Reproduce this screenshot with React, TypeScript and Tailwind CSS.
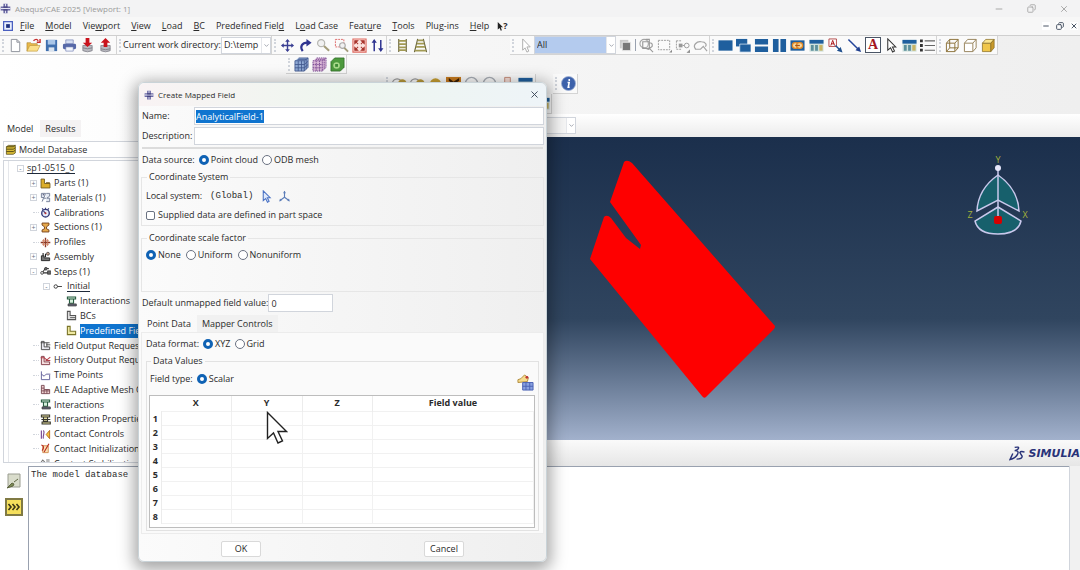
import { useEffect, useRef, type ReactNode } from "react";
import { ChevronDown, Copy, Minus, X } from "lucide-react";

const BLUE = "#1f5f9e";

// 16x16 toolbar and tree glyphs
const glyphs: Record<string, ReactNode> = {
  newFile: <path d="M3.5 1.5h6l3 3v10h-9zM9.5 1.5v3h3" fill="#fff" stroke="#8b8f99" />,
  open: (
    <>
      <path d="M1 14V5h4l1 1h6v2" fill="#e8b84a" stroke="#a8812a" strokeWidth=".6" />
      <path d="M1 14l3-6h11l-3 6z" fill="#fbe08a" stroke="#b78f32" strokeWidth=".6" />
      <path d="M8 3c2-2 4-2 5 0M15 1v3.500h-3.500" fill="none" stroke="#c62f2f" strokeWidth="1.500" />
    </>
  ),
  save: (
    <>
      <path d="M2 2h12v12H2z" fill="#3f6fae" />
      <path d="M4 2h8v5H4z" fill="#a9c6e8" />
      <path d="M5 10h6v4H5z" fill="#dbe4ef" />
    </>
  ),
  print: (
    <>
      <path d="M4 2h8v4H4z" fill="#d5def2" stroke="#5d6ca8" strokeWidth=".6" />
      <rect x="1" y="6" width="14" height="6" rx="1.500" fill="#5668a8" />
      <path d="M4 9.500h8V14H4z" fill="#f2f5fc" stroke="#5d6ca8" strokeWidth=".6" />
    </>
  ),
  dbDown: (
    <>
      <path d="M3 8h10v5.500q-5 2.500-10 0z" fill="#b9b9c0" stroke="#73737c" strokeWidth=".7" />
      <path d="M3 10.500q5 2 10 0" fill="none" stroke="#73737c" strokeWidth=".8" />
      <path d="M6 0h4v5h3L8 9.500 3 5h3z" fill="#c9131d" />
    </>
  ),
  dbUp: (
    <>
      <path d="M3 8h10v5.500q-5 2.500-10 0z" fill="#b9b9c0" stroke="#73737c" strokeWidth=".7" />
      <path d="M3 11.500q5 2 10 0" fill="none" stroke="#73737c" strokeWidth=".8" />
      <path d="M6 9.500h4V5h3L8 0 3 5h3z" fill="#c9131d" />
    </>
  ),
  pan: (
    <>
      <path d="M8 2.500v11M2.500 8h11" stroke="#3a3f93" strokeWidth="1.500" />
      <path d="M8 1l2.500 3h-5zM8 15l2.500-3h-5zM1 8l3-2.500v5zM15 8l-3-2.500v5z" fill="#3a3f93" />
    </>
  ),
  rotate: (
    <>
      <path d="M5 14C1.500 9 4.500 5 10 5" fill="none" stroke="#2f3490" strokeWidth="2.300" />
      <path d="M9 1l5.500 4L9 9z" fill="#2f3490" />
    </>
  ),
  zoom: (
    <>
      <circle cx="5.500" cy="5.500" r="3.800" fill="#f1f1f1" stroke="#b7b7b2" strokeWidth="1.300" />
      <path d="M8.500 8.500l5.500 5" stroke="#a39c7a" strokeWidth="2.200" />
    </>
  ),
  zoomBox: (
    <>
      <path d="M1.500 1.500h9v8h-9z" fill="none" stroke="#d66" strokeDasharray="2 1" />
      <circle cx="9" cy="8" r="3" fill="#f1f1f1" stroke="#aaa" strokeWidth="1.200" />
      <path d="M11 10.500l4 4" stroke="#a39c7a" strokeWidth="2" />
    </>
  ),
  fit: (
    <>
      <path d="M1 1h14v14H1z" fill="#fbe3de" stroke="#df6a60" strokeWidth="1.200" />
      <path d="M3 6V3H6zM10 3h3v3zM13 10v3h-3zM6 13H3v-3zM4 4l2.500 2.500M12 4L9.500 6.500M12 12L9.500 9.500M4 12l2.500-2.500" fill="#a8342c" stroke="#a8342c" strokeWidth="1.100" />
    </>
  ),
  cycle: (
    <>
      <path d="M4.500 3v11M11.500 2v11" stroke="#2f3490" strokeWidth="1.600" />
      <path d="M4.500 1l2.800 4H1.700zM11.500 15l2.800-4H8.700z" fill="#2f3490" />
    </>
  ),
  ladder: (
    <>
      <path d="M4 1v14M12 1v14" stroke="#67633a" strokeWidth="1.200" />
      <path d="M4 3h8M4 6.500h8M4 10h8M4 13h8" stroke="#a29a54" strokeWidth="1.900" />
    </>
  ),
  ladderPersp: (
    <>
      <path d="M5 1L1.500 15M11 1l3.500 14" stroke="#67633a" strokeWidth="1.200" />
      <path d="M5 2.500h6M4 6h8M3 9.500h10M2 13.500h12" stroke="#a29a54" strokeWidth="2" />
    </>
  ),
  arrowPale: <path d="M5 1l8 8.500H9.500l2 4.500-2 1-2-4.500L5 13z" fill="#fff" stroke="#aaa" />,
  squares: (
    <>
      <path d="M2 2h9v9H2z" fill="#c9c9c9" />
      <path d="M4.500 4.500h9v9h-9z" fill="#777" stroke="#eee" />
    </>
  ),
  selGroup: (
    <>
      <circle cx="5.500" cy="6" r="4.500" fill="none" stroke="#a5a5a5" strokeWidth="1.200" />
      <path d="M4 4h7v7H4zM7 1.500h4v3M11 5q4 0 3 4l-4 3-3-1M11 11l4 4" fill="none" stroke="#999" strokeWidth="1.200" />
    </>
  ),
  selRect: (
    <>
      <path d="M1.500 2.500h12v10h-12z" fill="none" stroke="#999" strokeDasharray="2 1" />
      <path d="M13 15.500h3v-3z" fill="#888" />
    </>
  ),
  selMid: (
    <>
      <path d="M1.500 3v9M1.500 3h5M1.500 12h5" fill="none" stroke="#999" strokeDasharray="2 1" />
      <path d="M4 6h4v4H4z" fill="#999" />
      <circle cx="12.500" cy="8" r="2.500" fill="none" stroke="#999" />
      <path d="M8 8h2M13 15.500h3v-3z" fill="#888" stroke="#999" />
    </>
  ),
  selLasso: <path d="M3 12c-4-4 1-9 6-8 5 0 6 4 4 5M2 12h6l3-3 4 5" fill="none" stroke="#a5a5a5" strokeWidth="1.300" />,
  vp1: <path d="M0.500 2.500h15v11h-15z" fill={BLUE} />,
  vpCascade: (
    <>
      <path d="M0 1h12v8H0z" fill={BLUE} />
      <path d="M4 6.500h12V15H4z" fill={BLUE} stroke="#dfeaf5" strokeWidth=".8" />
    </>
  ),
  vpTileH: <path d="M1 1h14v6H1zM1 9h14v6H1z" fill={BLUE} />,
  vpTileV: <path d="M1 1h6v14H1zM9 1h6v14H9z" fill={BLUE} />,
  vpLink: (
    <>
      <path d="M0.500 2.500h15v11h-15z" fill={BLUE} />
      <rect x="2.500" y="5" width="6.500" height="6" rx="3" fill="#f7d9a0" stroke="#e58a26" strokeWidth="1.400" />
      <rect x="7" y="5" width="6.500" height="6" rx="3" fill="#f7d9a0" stroke="#e58a26" strokeWidth="1.400" />
      <path d="M5.500 8h5" stroke="#a5541c" strokeWidth="1.400" />
    </>
  ),
  vpTable: (
    <>
      <path d="M0.500 2h15v12.500h-15z" fill="#cfe0dc" />
      <path d="M0.500 2h15v4h-15z" fill={BLUE} />
      <path d="M2 7.500h3v6H2zM6.500 7.500h3v6h-3z" fill="#5c8f9b" />
      <path d="M11 7.500h3.500v6H11z" fill="#c9b464" />
    </>
  ),
  annotate: (
    <>
      <path d="M1 1h8v8H1z" fill="#fff" stroke="#a33" strokeWidth=".9" />
      <path d="M3 8l2-5.500L7 8M3.500 6.200h3" fill="none" stroke="#a11" />
      <path d="M8 8l4 4" stroke="#1f4f8e" strokeWidth="1.500" />
      <path d="M15.500 15.500l-2-6-4 4z" fill="#1f4f8e" />
    </>
  ),
  arrowLine: (
    <>
      <path d="M1.500 1.500l10 10" stroke="#23449a" strokeWidth="1.600" />
      <path d="M15 15l-2-6-4 4z" fill="#1f3f8e" />
    </>
  ),
  arrow: <path d="M4 1l8.500 8.500H9l2.200 4.500-2 1L7 10.500 4 13z" fill="#fff" stroke="#333" strokeWidth="1.100" />,
  list: (
    <>
      <path d="M5 3h11M5 8h11M5 13h11" stroke="#666" strokeWidth="1.200" />
      <path d="M0 1.500h3v3H0zM0 6.500h3v3H0zM0 11.500h3v3H0z" fill="#333" />
    </>
  ),
  cubeWire: <path d="M1.500 5.500h9v9h-9zM5 1.500h9v9H5zM1.500 5.500L5 1.500M10.500 5.500l3.500-4M10.500 14.500l3.500-4M1.500 14.500l3.500-4" fill="none" stroke="#8a6f35" />,
  cubeHidden: <path d="M1.500 5.500h9v9h-9zM1.500 5.500L5 1.500h9v9l-3.500 4M10.500 5.500l3.500-4" fill="#fff" stroke="#948058" />,
  cubeShade: (
    <>
      <path d="M1.500 5.500h9v9h-9z" fill="#f0c64a" stroke="#8a6f25" strokeWidth=".8" />
      <path d="M1.500 5.500L5 1.500h9l-3.500 4z" fill="#fbe58e" stroke="#8a6f25" strokeWidth=".8" />
      <path d="M10.500 5.500l3.500-4v9l-3.500 4z" fill="#c99a2a" stroke="#8a6f25" strokeWidth=".8" />
    </>
  ),
  meshBlue: (
    <>
      <path d="M1 4l4-3h10v10l-4 4H1z" fill="#8fa9d4" />
      <path d="M1 4h10v11H1zM11 4l4-3M1 8h10M1 11.500h10M4.500 4v11M8 4v11M13 3v10M4 2.500h9.500M15 1v10l-4 4M11 8l4-3.500M11 11.500l4-3.500M5 1h10" fill="none" stroke="#43598f" strokeWidth=".9" />
    </>
  ),
  meshPurple: (
    <>
      <path d="M1 4l4-3h10v10l-4 4H1z" fill="#d9b7d6" />
      <path d="M1 4h10v11H1zM11 4l4-3M1 8h10M1 11.500h10M4.500 4v11M8 4v11M13 3v10M4 2.500h9.500M15 1v10l-4 4M5 1h10" fill="none" stroke="#7b4a94" strokeWidth="1" strokeDasharray="1.500 .8" />
    </>
  ),
  meshGreen: (
    <>
      <path d="M1 5l4-4h10v10l-4 4H1z" fill="#4d9a3e" stroke="#2c6a26" strokeWidth=".8" />
      <circle cx="7" cy="9" r="3.500" fill="#a8d98a" />
      <path d="M5.500 7.500h3v3h-3z" fill="#3c8a34" />
    </>
  ),
  ringGold: (
    <>
      <circle cx="5.500" cy="8" r="5" fill="none" stroke="#999" strokeWidth="1.200" />
      <circle cx="11" cy="8" r="4.500" fill="#b99a3a" />
    </>
  ),
  ringPale: <circle cx="8" cy="8" r="6.500" fill="none" stroke="#a8adb5" strokeWidth="1.500" />,
  goldBall: <circle cx="8" cy="8.500" r="6" fill="#c8a032" />,
  orangeBox: (
    <>
      <path d="M0 1h16v14H0z" fill="#c77a1e" />
      <path d="M3 2l5 4 6-4v3L8 9 3 5z" fill="#3b2108" />
    </>
  ),
  redBox: <path d="M5 1.500h6V14H5z" fill="#f5dcd5" stroke="#c58a78" />,
  info: (
    <>
      <circle cx="8" cy="8" r="7.500" fill="#3d62ab" stroke="#9fb0d4" strokeWidth=".8" />
      <path d="M8.800 3.200v2M7 7h1.700l-1 5h1.500" fill="none" stroke="#fff" strokeWidth="1.700" />
    </>
  ),
  // model tree
  db: (
    <>
      <path d="M2 4l3-2h10v11l-3 2H2z" fill="#d9bb35" stroke="#4b4211" />
      <path d="M2 7.500h10l3-2M2 11h10l3-2M2 4h10l3-2" fill="none" stroke="#4b4211" strokeWidth="1.300" />
    </>
  ),
  part: (
    <>
      <path d="M1.500 1.500h5V8h8v6.500h-13z" fill="#dcae2c" stroke="#6d561a" strokeWidth="1.200" />
      <path d="M9 6h5l1 2H8z" fill="#6d561a" />
    </>
  ),
  material: (
    <>
      <path d="M2 2h6l-2 6H2zM3 14l2-5h4M9 2h5v4l-4 3h4v5H9" fill="#e2e8f2" stroke="#66718c" strokeWidth="1.200" />
      <path d="M4 4h2" stroke="#446" strokeWidth="1.500" />
    </>
  ),
  calib: (
    <>
      <circle cx="8" cy="9" r="5.500" fill="#e8ebf8" stroke="#343b78" strokeWidth="2" />
      <path d="M8 9L5 6M8 1v3M3 2l2 2M13 2l-2 2" stroke="#343b78" strokeWidth="1.600" />
      <circle cx="8" cy="9" r="1.500" fill="#b33" />
    </>
  ),
  section: <path d="M3 1.500h10v3L9.500 7v3l3.500 1.500v3H3v-3L6.500 10V7L3 4.500z" fill="#e6a94c" stroke="#733f19" strokeWidth="1.300" />,
  profile: (
    <>
      <path d="M8 1v14M1 8h14" stroke="#8b3a28" strokeWidth="2" />
      <path d="M5 3v10M11 3v10M3 5.500h10M3 10.500h10" stroke="#cd7a5a" strokeWidth="1.200" />
    </>
  ),
  assembly: (
    <>
      <path d="M2 14V7h4v3h8v4z" fill="#777" stroke="#222" strokeWidth="1.300" />
      <path d="M4.500 7V3M8 9V4" stroke="#222" strokeWidth="1.600" />
      <circle cx="11.500" cy="4" r="2.200" fill="#c9a08a" stroke="#333" />
    </>
  ),
  steps: (
    <>
      <path d="M4 9l4-6 5 1M4 10h9" stroke="#333" strokeWidth="1.500" fill="none" />
      <circle cx="3" cy="10" r="2" fill="#fff" stroke="#333" strokeWidth="1.200" />
      <circle cx="8.500" cy="4" r="2" fill="#666" stroke="#333" />
      <path d="M11 7h4.500v5H11z" fill="#666" stroke="#333" />
    </>
  ),
  initial: (
    <>
      <circle cx="4" cy="8" r="2.500" fill="#fff" stroke="#333" strokeWidth="1.300" />
      <path d="M6.500 8H13" stroke="#333" strokeWidth="1.300" />
    </>
  ),
  interaction: (
    <>
      <path d="M2 1.500h12v3H2zM5 4.500h6v6H5z" fill="#d5efdc" stroke="#22573b" strokeWidth="1.500" />
      <path d="M3 11.500h12v3H3z" fill="#667" stroke="#333" />
    </>
  ),
  bc: (
    <>
      <path d="M2 2h4v6h8v6H2z" fill="#ddd" stroke="#555" strokeWidth="1.500" />
      <path d="M6 11h8" stroke="#555" strokeWidth="1.200" />
    </>
  ),
  predef: <path d="M2 2h4v7h8v5H2z" fill="#efe9a2" stroke="#7a7428" strokeWidth="1.600" />,
  fieldOut: (
    <>
      <path d="M2 2v12h12v-4H6V2z" fill="#e8e8ee" stroke="#444" strokeWidth="1.300" />
      <path d="M1 4h13M9 7h6M10 4v6" stroke="#444" strokeWidth="1.300" />
    </>
  ),
  histOut: (
    <>
      <path d="M2 2v12h12v-4H6V2z" fill="#f5dede" stroke="#7d3440" strokeWidth="1.300" />
      <path d="M1 4h5l4 3 5-4M8 8h7" fill="none" stroke="#b3404a" strokeWidth="1.500" />
    </>
  ),
  time: <path d="M2 2v12h12V7M2 6l4 3 3-3h6" fill="none" stroke="#66649c" strokeWidth="1.400" />,
  ale: <path d="M2 2h4v6h8v6H2zM2 6h4M2 10h12M6 8v6M10 8v6" fill="#f2d3d3" stroke="#764650" strokeWidth="1.300" />,
  intProp: (
    <>
      <path d="M2 1.500h12v3H2zM5 4.500h6v6H5zM3 11.500h12v3H3z" fill="#e5dc9c" stroke="#34342c" strokeWidth="1.500" />
      <path d="M2 8h13" stroke="#34342c" strokeWidth="1.500" />
    </>
  ),
  contact: (
    <>
      <path d="M2 2v12M5 2c3 3-2 9 0 12" fill="none" stroke="#7b4a94" strokeWidth="1.700" />
      <path d="M14 2L9 8l5 6z" fill="#f3c23b" stroke="#b4641d" strokeWidth="1.300" />
    </>
  ),
  contactInit: (
    <>
      <path d="M4 4h8v10H4z" fill="#fbe3b5" stroke="#d08a4c" strokeWidth="1.300" />
      <path d="M13 1L6 13M2 3c4 0 4 5 1 8" fill="none" stroke="#b92f24" strokeWidth="1.700" />
    </>
  ),
  stabil: <path d="M1 7l3-4 3 3M9 3h5M9 6h5M2 12h11" fill="none" stroke="#777" strokeWidth="1.500" />,
};

function Glyph({ name, className = "size-[15px]" }: { name: string; className?: string }) {
  return (
    <svg viewBox="0 0 16 16" className={`shrink-0 ${className}`} aria-hidden="true">
      {glyphs[name]}
    </svg>
  );
}

function AppLogo({ className }: { className: string }) {
  return (
    <svg viewBox="0 0 16 16" className={`shrink-0 ${className}`} aria-hidden="true">
      <path d="M5 1h6v4h4v6h-4v4H5v-4H1V5h4z" fill="#6c6aa5" />
      <path d="M7.300 1h1.400v4H7.300zM7.300 11h1.400v4H7.300zM1 7.300h14v1.400H1z" fill="#e7e7f4" />
      <path d="M5 5h6v2H5zM5 9h6v2H5z" fill="#45437f" />
    </svg>
  );
}

function Grip() {
  return <span className="mx-[2px] h-[13px] w-[2px] shrink-0 border-l-2 border-dotted border-gray-300" />;
}

function ToolIcons({ names, cell = "w-[18px]" }: { names: string[]; cell?: string }) {
  return (
    <>
      {names.map((name, i) => (
        <button key={i} type="button" aria-label={name} className={`flex h-[18px] shrink-0 items-center justify-center ${cell}`}>
          <Glyph name={name} />
        </button>
      ))}
    </>
  );
}

function Toolbar({ children, className = "" }: { children: ReactNode; className?: string }) {
  return (
    <div className={`flex shrink-0 items-center border-r border-b border-[#d4d4d4] bg-[#fafafa] ${className}`}>
      {children}
    </div>
  );
}

const menus: [string, string, string][] = [
  ["", "F", "ile"],
  ["", "M", "odel"],
  ["Vie", "w", "port"],
  ["", "V", "iew"],
  ["", "L", "oad"],
  ["", "B", "C"],
  ["Predefined Fiel", "d", ""],
  ["L", "o", "ad Case"],
  ["Feat", "u", "re"],
  ["", "T", "ools"],
  ["Plu", "g", "-ins"],
  ["", "H", "elp"],
];

type Node = { label: string; level: 0 | 1 | 2 | 3; icon?: string; expand?: "+" | "-"; state?: "under" | "selected" };

const tree: Node[] = [
  { label: "sp1-0515_0", level: 0, expand: "-", state: "under" },
  { label: "Parts (1)", level: 1, icon: "part", expand: "+" },
  { label: "Materials (1)", level: 1, icon: "material", expand: "+" },
  { label: "Calibrations", level: 1, icon: "calib" },
  { label: "Sections (1)", level: 1, icon: "section", expand: "+" },
  { label: "Profiles", level: 1, icon: "profile" },
  { label: "Assembly", level: 1, icon: "assembly", expand: "+" },
  { label: "Steps (1)", level: 1, icon: "steps", expand: "-" },
  { label: "Initial", level: 2, icon: "initial", expand: "-", state: "under" },
  { label: "Interactions", level: 3, icon: "interaction" },
  { label: "BCs", level: 3, icon: "bc" },
  { label: "Predefined Fields", level: 3, icon: "predef", state: "selected" },
  { label: "Field Output Requests", level: 1, icon: "fieldOut" },
  { label: "History Output Requests", level: 1, icon: "histOut" },
  { label: "Time Points", level: 1, icon: "time" },
  { label: "ALE Adaptive Mesh Constraints", level: 1, icon: "ale" },
  { label: "Interactions", level: 1, icon: "interaction" },
  { label: "Interaction Properties", level: 1, icon: "intProp" },
  { label: "Contact Controls", level: 1, icon: "contact" },
  { label: "Contact Initializations", level: 1, icon: "contactInit" },
  { label: "Contact Stabilizations", level: 1, icon: "stabil" },
];

const indents = ["pl-[8px]", "pl-[21px]", "pl-[34px]", "pl-[47px]"];

function TreeRow({ node }: { node: Node }) {
  return (
    <li className={`flex items-center ${indents[node.level]}`}>
      <span className="flex w-[10px] shrink-0 items-center">
        {node.expand && (
          <span className="flex size-[7px] items-center justify-center border border-gray-300 bg-white text-[7px] leading-none text-gray-500">
            {node.expand}
          </span>
        )}
        {!node.expand && node.level !== 3 && <span className="ml-[3px] w-[6px] border-t border-dotted border-gray-300" />}
      </span>
      {node.icon && <Glyph name={node.icon} className="mr-[3px] size-[11px]" />}
      <span
        className={
          node.state === "selected"
            ? "bg-[#0f74cf] pr-4 leading-[14px] text-white"
            : node.state === "under"
            ? "border-b border-gray-800 leading-[11px]"
            : ""
        }
      >
        {node.label}
      </span>
    </li>
  );
}

function Combo({ label, value, className }: { label: string; value: string; className: string }) {
  return (
    <span className={`relative flex shrink-0 items-center border border-gray-300 ${className}`}>
      <select aria-label={label} className="h-full w-full appearance-none bg-transparent px-[2px] outline-none">
        <option>{value}</option>
      </select>
      <span className="pointer-events-none absolute inset-y-0 right-0 flex w-[9px] items-center justify-center border-l border-gray-200 bg-white">
        <ChevronDown className="size-[7px] text-gray-500" />
      </span>
    </span>
  );
}

function Radio({ name, label, checked }: { name: string; label: string; checked?: boolean }) {
  return (
    <label className="flex items-center gap-[2px]">
      <input
        type="radio"
        name={name}
        defaultChecked={checked}
        className="size-[10px] appearance-none rounded-full border border-gray-500 bg-white checked:border-[3px] checked:border-[#0f62b4]"
      />
      {label}
    </label>
  );
}

function MappedFieldDialog() {
  const nameRef = useRef<HTMLInputElement>(null);

  useEffect(() => {
    nameRef.current?.focus();
    nameRef.current?.select();
  }, []);

  return (
    <div
      role="dialog"
      aria-label="Create Mapped Field"
      className="absolute top-[82px] left-[138px] flex w-[409px] flex-col rounded-[6px] border border-[#c9d3d8] bg-linear-to-r from-[#fbfbfb] to-[#efefef] shadow-[0_4px_16px_4px_rgba(0,0,0,0.35)]"
    >
      <header className="flex h-[23px] items-center rounded-t-[6px] bg-linear-to-r from-[#f9f3f4] via-[#eef6ef] to-[#eef4f8] pr-[6px] pl-[5px]">
        <AppLogo className="mr-[4px] size-[10px]" />
        <h1 className="text-[8px]">Create Mapped Field</h1>
        <button type="button" aria-label="Close" className="ml-auto">
          <X className="size-[11px] text-gray-700" strokeWidth={2} />
        </button>
      </header>

      <div className="grid grid-cols-[50px_1fr] items-center gap-x-[2px] gap-y-[2px] pt-px pr-[2px] pl-[3px]">
        <label htmlFor="field-name">Name:</label>
        <input
          id="field-name"
          ref={nameRef}
          defaultValue="AnalyticalField-1"
          className="h-[18px] border border-gray-300 bg-white px-px outline-none selection:bg-[#0f74cf] selection:text-white"
        />
        <label htmlFor="field-desc">Description:</label>
        <input id="field-desc" className="h-[18px] border border-gray-300 bg-white px-px outline-none" />
      </div>
      <hr className="mx-[3px] mt-[2px] border-t-2 border-[#dcdcdc]" />

      <div className="flex h-[22px] items-center gap-[4px] pl-[3px]">
        <span>Data source:</span>
        <Radio name="source" label="Point cloud" checked />
        <Radio name="source" label="ODB mesh" />
      </div>

      <fieldset className="mx-[2px] mb-[6px] h-[55px] border border-[#e6e6e6] px-[4px]">
        <legend className="ml-px px-[2px] leading-[12px]">Coordinate System</legend>
        <div className="mt-[6px] flex h-[14px] items-center">
          <span>Local system:</span>
          <span className="ml-[8px] font-['Liberation_Mono',monospace]">(Global)</span>
          <button type="button" aria-label="Pick system" className="ml-[7px]">
            <svg viewBox="0 0 16 16" className="size-[13px]" aria-hidden="true">
              <path d="M4 1l8.500 8.500H9l2.200 4.500-2 1L7 10.500 4 13z" fill="#dfe9fb" stroke="#4a72c4" strokeWidth="1.300" />
            </svg>
          </button>
          <button type="button" aria-label="Create system" className="ml-[5px]">
            <svg viewBox="0 0 16 16" className="size-[13px]" aria-hidden="true">
              <path d="M8 1.500v7.500L2.500 13M8 9l5.500 4" fill="none" stroke="#5b7cb8" strokeWidth="1.400" />
              <path d="M6.300 4L8 1l1.700 3zM1.500 14l1-3.500 2 2.800zM14.500 14l-1-3.500-2 2.800z" fill="#5b7cb8" />
            </svg>
          </button>
        </div>
        <label className="mt-[5px] flex h-[14px] items-center gap-[3px]">
          <input type="checkbox" className="size-[9px] appearance-none rounded-[2px] border border-gray-500 bg-white" />
          Supplied data are defined in part space
        </label>
      </fieldset>

      <fieldset className="mx-[2px] mb-[2px] h-[60px] border border-[#e6e6e6] px-[4px]">
        <legend className="ml-px px-[2px] leading-[12px]">Coordinate scale factor</legend>
        <div className="mt-[4px] flex h-[14px] items-center gap-[5px]">
          <Radio name="scale" label="None" checked />
          <Radio name="scale" label="Uniform" />
          <Radio name="scale" label="Nonuniform" />
        </div>
      </fieldset>

      <div className="flex items-center pl-[3px]">
        <label htmlFor="unmapped">Default unmapped field value:</label>
        <input id="unmapped" defaultValue="0" className="h-[18px] w-[65px] border border-gray-300 bg-white px-[2px] outline-none" />
      </div>

      <div role="tablist" className="mt-[3px] flex h-[17px] items-center pl-[2px]">
        <button type="button" role="tab" aria-selected="true" className="h-full px-[6px]">
          Point Data
        </button>
        <button type="button" role="tab" aria-selected="false" className="h-full bg-[#f1f1f1] px-[5px]">
          Mapper Controls
        </button>
      </div>

      <div className="mx-[2px] border border-[#ececec] bg-[#fafafa] px-[4px] pb-[2px]">
        <div className="flex h-[22px] items-center gap-[4px]">
          <span>Data format:</span>
          <Radio name="format" label="XYZ" checked />
          <Radio name="format" label="Grid" />
        </div>
        <fieldset className="border border-[#e2e2e2] pr-[3px] pb-[2px] pl-[2px]">
          <legend className="ml-[2px] px-[2px] leading-[12px]">Data Values</legend>
          <div className="flex h-[28px] items-center gap-[4px] pb-[4px] pl-px">
            <span>Field type:</span>
            <Radio name="type" label="Scalar" checked />
            <button type="button" aria-label="Read data from file" className="mt-[7px] mr-px ml-auto">
              <svg viewBox="0 0 18 18" className="size-[17px]" aria-hidden="true">
                <path d="M1 9V6l3-1 4-4 4 3-1 4z" fill="#f6dc8c" stroke="#b08a3a" />
                <circle cx="10.500" cy="3.500" r="1.500" fill="#b33" />
                <path d="M6 9h11v8H6z" fill="#88a0df" stroke="#4a62b5" />
                <path d="M6 13h11M9.500 9v8M13.500 9v8" stroke="#4a62b5" />
              </svg>
            </button>
          </div>
          <div className="border border-[#bdbdbd] bg-white pb-[3px]">
            <table className="w-full table-fixed border-collapse">
              <thead>
                <tr className="h-[15px]">
                  <th className="w-[11px]"></th>
                  <th className="w-[70px] border-r border-[#ececec]">X</th>
                  <th className="w-[71px] border-r border-[#ececec]">Y</th>
                  <th className="w-[70px] border-r border-[#ececec]">Z</th>
                  <th>Field value</th>
                </tr>
              </thead>
              <tbody>
                {[1, 2, 3, 4, 5, 6, 7, 8].map((n) => (
                  <tr key={n} className="h-[14px]">
                    <th scope="row" className="border-r border-[#ececec] leading-[13px]">
                      {n}
                    </th>
                    <td className="border border-[#f1f1f1]"></td>
                    <td className="border border-[#f1f1f1]"></td>
                    <td className="border border-[#f1f1f1]"></td>
                    <td className="border border-[#f1f1f1]"></td>
                  </tr>
                ))}
              </tbody>
            </table>
          </div>
        </fieldset>
      </div>

      <footer className="flex h-[27px] items-center justify-between pt-[4px] pr-[82px] pl-[82px]">
        <button type="button" className="h-[16px] w-[40px] rounded-[2px] border border-[#d9d9d9] bg-white">
          OK
        </button>
        <button type="button" className="h-[16px] w-[40px] rounded-[2px] border border-[#d9d9d9] bg-white">
          Cancel
        </button>
      </footer>
    </div>
  );
}

function Viewport() {
  return (
    <div className="flex min-h-0 flex-1 justify-end bg-linear-to-b from-[#1b2f4c] from-0% via-[#30455f] via-60% to-[#a2b1cc] to-100%">
      <svg viewBox="547 137 533 303" className="h-full w-[533px] shrink-0" aria-label="Point cloud view">
        <path
          d="M624 162q3-3 8 1l143 163q0 2-1 3l-68 68q-2 2-4-1L590 259l14-42q3-3 7 1l15 20 14 11 1-4-31-43 13-37z"
          fill="#fe0000"
        />
        <g stroke="#c9c8ec" strokeWidth="1.500" fill="#17606c">
          <path d="M998 175q-20 14-21 36l21-11 21 11q-1-22-21-36z" />
          <path d="M998 207l-23 14q3 13 23 13t23-13z" />
          <path d="M998 170v48" />
        </g>
        <circle cx="998" cy="168" r="3" fill="#e6e6fa" />
        <rect x="994" y="216" width="8" height="8" rx="2" fill="#d60000" />
        <g fill="#a3b13a" fontSize="9" textAnchor="middle">
          <text x="998" y="163">Y</text>
          <text x="1025" y="218">X</text>
          <text x="970" y="218">Z</text>
        </g>
      </svg>
    </div>
  );
}

export default function App() {
  return (
    <div className="relative flex h-screen flex-col overflow-hidden bg-linear-to-r from-white via-[#f5f5f5] to-[#efefef] font-['Open_Sans',sans-serif] text-[9px] leading-[12px] text-[#2b2b2b]">
      <header className="flex h-[17px] shrink-0 items-center bg-[#f3f3f4] text-[8px] text-[#9a9a9a]">
        <AppLogo className="mr-[4px] size-[11px]" />
        <span>Abaqus/CAE 2025 [Viewport: 1]</span>
        <div className="ml-auto flex items-center gap-[23px] pr-[11px]">
          <button type="button" aria-label="Minimize"><Minus className="size-[10px]" /></button>
          <button type="button" aria-label="Restore"><Copy className="size-[9px] -scale-x-100" /></button>
          <button type="button" aria-label="Close"><X className="size-[10px]" /></button>
        </div>
      </header>

      <nav className="flex h-[18px] shrink-0 items-center bg-[#f7f7f7] pl-[3px]">
        <svg viewBox="0 0 16 16" className="mr-[7px] size-[10px]" aria-hidden="true">
          <path d="M1 1h14v14H1z" fill="#e8eefc" stroke="#4a5fc0" strokeWidth="2" />
          <path d="M5 5h6v6H5z" fill="#1d2f7e" />
        </svg>
        <div className="flex gap-x-[11px]">
          {menus.map(([before, key, after]) => (
            <button key={before + key + after} type="button">
              {before}
              <u>{key}</u>
              {after}
            </button>
          ))}
          <button type="button" aria-label="Context help" className="-ml-[3px] flex items-center font-bold">
            <svg viewBox="0 0 8 12" className="h-[9px] w-[6px]" aria-hidden="true">
              <path d="M1 0l7 7H5l1.500 4-1.500.5L3.500 8 1 10z" fill="#222" />
            </svg>
            ?
          </button>
        </div>
        <div className="ml-auto flex items-center gap-[6px] pr-[2px] text-gray-600">
          <button type="button" aria-label="Minimize viewport" className="bg-white"><Minus className="size-[8px]" strokeWidth={3} /></button>
          <button type="button" aria-label="Restore viewport" className="bg-white"><Copy className="size-[8px] -scale-x-100" strokeWidth={3} /></button>
          <button type="button" aria-label="Close viewport" className="bg-white"><X className="size-[8px]" strokeWidth={3} /></button>
        </div>
      </nav>

      <div className="flex h-[20px] shrink-0 border-t border-[#cfcfcf]">
        <Toolbar className="pr-[2px]">
          <Grip />
          <ToolIcons names={["newFile", "open", "save", "print", "dbDown", "dbUp"]} />
        </Toolbar>
        <Toolbar>
          <Grip />
          <span className="w-[98px] shrink-0 whitespace-nowrap">Current work directory:</span>
          <Combo label="Current work directory" value="D:\temp" className="h-[17px] w-[50px] bg-white" />
        </Toolbar>
        <Toolbar>
          <Grip />
          <ToolIcons names={["pan", "rotate", "zoom", "zoomBox", "fit", "cycle"]} />
        </Toolbar>
        <Toolbar>
          <Grip />
          <ToolIcons names={["ladder", "ladderPersp"]} />
        </Toolbar>
        <Toolbar className="ml-[80px]">
          <Grip />
          <ToolIcons names={["arrowPale"]} />
          <Combo label="Selection filter" value="All" className="h-[18px] w-[82px] bg-[#b4cbee]" />
          <ToolIcons names={["squares"]} />
          <span className="mx-px h-[12px] border-l border-gray-400" />
          <ToolIcons names={["selGroup", "selRect", "selMid", "selLasso"]} />
        </Toolbar>
        <Toolbar>
          <Grip />
          <ToolIcons names={["vp1", "vpCascade", "vpTileH", "vpTileV"]} />
          <ToolIcons names={["vpLink", "vpTable", "annotate", "arrowLine"]} cell="w-[19px]" />
          <button type="button" aria-label="Text" className="mx-px flex size-[16px] shrink-0 items-center justify-center border border-gray-600 bg-white font-['Liberation_Serif',serif] text-[14px] leading-none font-bold text-[#a31621]">
            A
          </button>
          <ToolIcons names={["arrow", "vpTable", "list"]} />
        </Toolbar>
        <Toolbar>
          <Grip />
          <ToolIcons names={["cubeWire", "cubeHidden", "cubeShade"]} />
        </Toolbar>
      </div>

      <div className="flex h-[19px] shrink-0 pl-[286px]">
        <Toolbar>
          <Grip />
          <ToolIcons names={["meshBlue", "meshPurple", "meshGreen"]} />
        </Toolbar>
      </div>
      <div className="flex h-[20px] shrink-0 pl-[384px]">
        <Toolbar className="w-[152px]">
          <Grip />
          <ToolIcons names={["ringGold", "ringGold", "goldBall", "orangeBox", "ringPale", "ringPale", "redBox", "vpTable"]} />
        </Toolbar>
        <Toolbar className="ml-[17px]">
          <Grip />
          <ToolIcons names={["info"]} />
        </Toolbar>
      </div>
      <div className="flex h-[20px] shrink-0 pl-[384px]">
        <Toolbar className="w-[168px] justify-end">
          <ToolIcons names={["vpTable"]} />
        </Toolbar>
      </div>

      <main className="flex min-h-0 flex-1">
        <aside className="flex w-[200px] shrink-0 flex-col pt-[6px]">
          <div role="tablist" className="flex h-[17px] shrink-0 items-center">
            <button type="button" role="tab" aria-selected="true" className="h-full px-[7px]">
              Model
            </button>
            <button type="button" role="tab" aria-selected="false" className="h-full bg-[#f4f2f3] px-[5px]">
              Results
            </button>
          </div>
          <div className="mt-[4px] ml-[3px] flex h-[17px] shrink-0 items-center border border-gray-300 bg-white pl-px">
            <Glyph name="db" className="mr-[3px] size-[11px]" />
            Model Database
          </div>
          <div className="mt-[2px] mb-[3px] ml-[3px] min-h-0 flex-1 overflow-hidden border border-gray-300 bg-white pl-[4px]">
            <ul className="grid h-[310px] auto-rows-fr border-l border-gray-200 whitespace-nowrap">
              {tree.map((node, i) => (
                <TreeRow key={i} node={node} />
              ))}
            </ul>
          </div>
        </aside>

        <section className="flex min-w-0 flex-1 flex-col">
          <div className="flex h-[23px] shrink-0 items-center bg-linear-to-b from-white to-[#ececec] pl-[184px]">
            <Combo label="Context" value="" className="h-[17px] w-[192px] bg-[#f6f6f6]" />
          </div>
          <Viewport />
          <div className="flex h-[26px] shrink-0 items-center justify-end gap-[2px] bg-linear-to-b from-[#fafafa] to-[#e6e6e6] text-[#283278]">
            <svg viewBox="0 0 18 16" className="h-[15px] w-[17px]" aria-hidden="true">
              <path d="M6 1.500q5-1 4 1T6 5q5-.5 3 4-2 4-8 5.500L4 8M16.500 6.500q-4-1.500-5 .5l2.500 4q0 3-6 3" fill="none" stroke="currentColor" strokeWidth="1.500" />
            </svg>
            <span className="font-['DejaVu_Sans',sans-serif] text-[11px] leading-none font-bold italic">SIMULIA</span>
          </div>
        </section>
      </main>

      <section className="flex h-[104px] shrink-0 bg-[#f1f1f1]">
        <div className="flex w-[28px] shrink-0 flex-col items-center gap-[9px] bg-white pt-[7px]">
          <button type="button" aria-label="Message area">
            <svg viewBox="0 0 16 16" className="size-[16px]" aria-hidden="true">
              <path d="M2 1h12v13H2z" fill="#d9dccb" stroke="#9a9c90" />
              <path d="M1 15l5-5 2 1-1 2zM8 9l4-3" fill="#7c8a54" stroke="#5f6642" />
            </svg>
          </button>
          <button type="button" aria-label="Command line" className="flex size-[18px] items-center justify-center border-2 border-[#807a44] bg-[#f5df5c]">
            <svg viewBox="0 0 14 8" className="h-[8px] w-[14px]" aria-hidden="true">
              <path d="M1.500 1l2.500 3-2.500 3M5.500 1L8 4 5.500 7M9.500 1L12 4 9.500 7" fill="none" stroke="#3a3617" strokeWidth="1.600" />
            </svg>
          </button>
        </div>
        <div className="min-w-0 flex-1 border-t border-l border-gray-400 bg-white p-[2px] font-['Liberation_Mono',monospace]">
          The model database
        </div>
        <div className="w-[11px] shrink-0 border-l border-gray-300" />
      </section>

      <MappedFieldDialog />

      <svg viewBox="0 0 22 34" className="pointer-events-none absolute top-[411px] left-[266px] h-[34px] w-[22px]" aria-hidden="true">
        <path d="M1.500 1.500v26l6-5.500 4.500 10 4.500-2-4.500-9.500h8.500z" fill="#fff" stroke="#222" strokeWidth="1.400" />
      </svg>
    </div>
  );
}
